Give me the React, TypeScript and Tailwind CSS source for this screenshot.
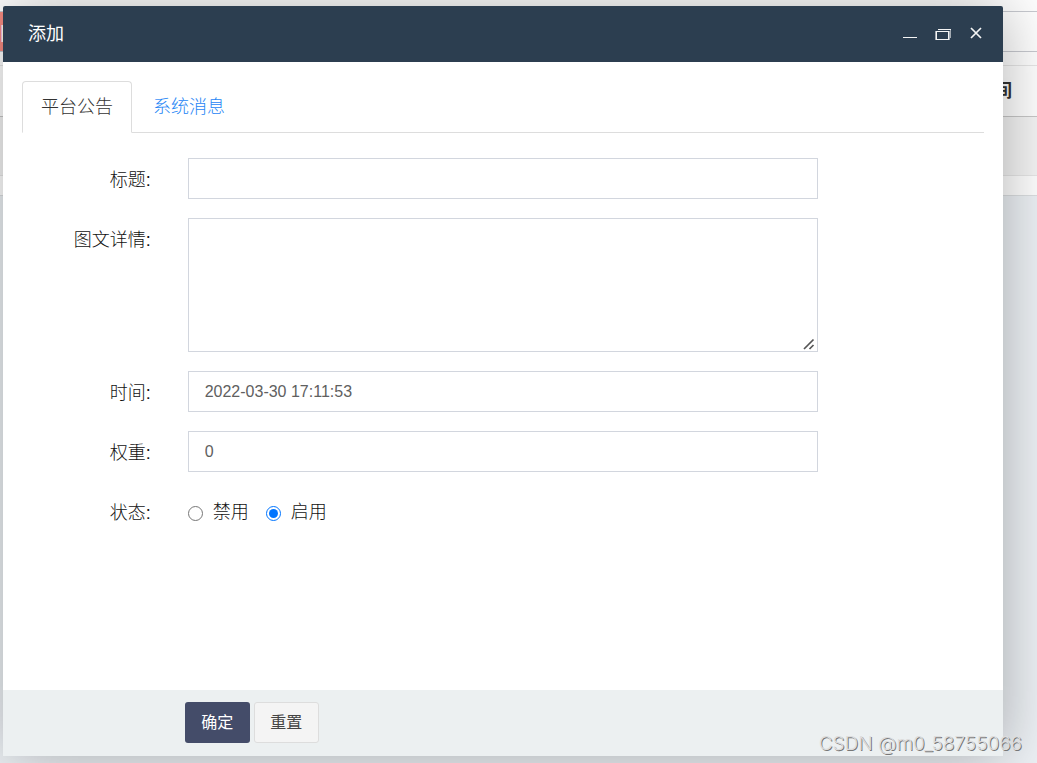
import { useState } from "react";
import type { ReactNode } from "react";

interface FieldRowProps {
  label: string;
  htmlFor?: string;
  children: ReactNode;
}

interface Tab {
  id: string;
  label: string;
}

const tabs: Tab[] = [
  { id: "notice", label: "平台公告" },
  { id: "message", label: "系统消息" },
];

const statuses = ["禁用", "启用"];

const inputClass =
  "block w-full border border-[#d2d6de] bg-white px-4 text-base text-[#606060] outline-none";

function FieldRow({ label, htmlFor, children }: FieldRowProps) {
  return (
    <div className="grid grid-cols-12">
      <label htmlFor={htmlFor} className="col-span-2 px-[19px] pt-[9px] text-right leading-[26px]">
        {label}
      </label>
      <div className="col-span-8 px-[18px]">{children}</div>
    </div>
  );
}

function PageBehind() {
  return (
    <div aria-hidden="true" className="flex min-h-screen flex-col bg-[#edf1f5]">
      <div className="bg-white">
        <div className="h-[11px]" />
        <div className="flex h-[41px] border-y border-[#c8cad0]">
          <div className="flex w-8 items-center bg-[#f58a80] text-white">|</div>
        </div>
        <div className="h-[13px]" />
        <div className="flex h-[52px] items-center justify-end border-t border-b border-t-[#e7e7e7] border-b-[#c8c8c8] pr-[25px] text-lg font-bold text-[#333]">
          时间
        </div>
        <div className="h-[59px] border-b border-[#e7e7e7] bg-[#f5f5f5]" />
        <div className="h-5 border-b border-[#dcdfe1]" />
      </div>
    </div>
  );
}

function WindowControls() {
  return (
    <div className="flex gap-[17px] text-[#f4f4f4]">
      <button type="button" aria-label="最小化" className="h-4 w-4">
        <svg viewBox="0 0 16 16" className="h-4 w-4" shapeRendering="crispEdges">
          <path d="M1 11.5h14" stroke="currentColor" fill="none" />
        </svg>
      </button>
      <button type="button" aria-label="最大化" className="h-4 w-4">
        <svg viewBox="0 0 16 16" className="h-4 w-4" shapeRendering="crispEdges" overflow="visible">
          <path d="M1 5.5h13M1 13.5h13" stroke="currentColor" fill="none" />
          <path d="M1.5 5v9M13.5 5v9" stroke="currentColor" fill="none" />
          <path d="M3 3.5h13" stroke="currentColor" fill="none" />
          <path d="M.5 5v9M14.5 5v9M15.500 4v8" stroke="currentColor" opacity="0.6" fill="none" />
        </svg>
      </button>
      <button type="button" aria-label="关闭" className="h-4 w-4">
        <svg viewBox="0 0 16 16" className="h-4 w-4">
          <path d="M3 2l10 10M13 2L3 12" stroke="currentColor" strokeWidth="1.7" fill="none" />
        </svg>
      </button>
    </div>
  );
}

export default function App() {
  const [activeTab, setActiveTab] = useState("notice");

  return (
    <div className="relative overflow-hidden font-['Liberation_Sans','Noto_Sans_CJK_SC',sans-serif] text-lg text-[#333]">
      <PageBehind />

      <div
        role="dialog"
        aria-labelledby="dialog-title"
        className="absolute top-1.5 right-[34px] bottom-[7px] left-[3px] flex flex-col rounded-xs bg-white shadow-[1px_1px_62px_rgba(0,0,0,0.3)]"
      >
        <header className="flex h-14 shrink-0 items-center justify-between rounded-t-xs bg-[#2c3e50] pr-[19px] pl-[25px]">
          <h2 id="dialog-title" className="text-white">添加</h2>
          <WindowControls />
        </header>

        <form className="flex flex-1 flex-col" onSubmit={(e) => e.preventDefault()}>
          <div role="tablist" className="mx-[19px] mt-[19px] flex h-[52px] border-b border-[#ddd] font-light">
            {tabs.map((tab) => (
              <button
                key={tab.id}
                type="button"
                role="tab"
                aria-selected={activeTab === tab.id}
                onClick={() => setActiveTab(tab.id)}
                className={
                  activeTab === tab.id
                    ? "-mb-px mr-0.5 rounded-t border border-[#ddd] border-b-white bg-white px-[18px] text-[#333]"
                    : "-mb-px mr-0.5 border border-transparent px-[18px] text-[#1f86f5]"
                }
              >
                {tab.label}
              </button>
            ))}
          </div>

          <div className="flex flex-1 flex-col gap-[19px] pt-[25px] font-light text-[#111]">
            <FieldRow label="标题:" htmlFor="title">
              <input id="title" type="text" className={`${inputClass} h-[41px]`} />
            </FieldRow>
            <FieldRow label="图文详情:" htmlFor="detail">
              <div className="relative">
                <textarea id="detail" className={`${inputClass} h-[134px] resize-none py-2`} />
                <svg viewBox="0 0 12 12" className="pointer-events-none absolute right-[3px] bottom-0.5 h-3 w-3">
                  <path d="M1 11L10.5 1.5M6.5 11l4-4" stroke="#555" strokeWidth="1.7" fill="none" />
                </svg>
              </div>
            </FieldRow>
            <FieldRow label="时间:" htmlFor="time">
              <input id="time" type="text" defaultValue="2022-03-30 17:11:53" className={`${inputClass} h-[41px]`} />
            </FieldRow>
            <FieldRow label="权重:" htmlFor="weight">
              <input id="weight" type="text" defaultValue="0" className={`${inputClass} h-[41px]`} />
            </FieldRow>
            <FieldRow label="状态:">
              <div className="flex gap-[17px] pt-2 leading-[26px]">
                {statuses.map((status) => (
                  <label key={status} className="flex items-center gap-2.5">
                    <input type="radio" name="status" value={status} defaultChecked={status === "启用"} className="mt-0.5 h-[15px] w-[15px]" />
                    {status}
                  </label>
                ))}
              </div>
            </FieldRow>
          </div>

          <footer className="grid grid-cols-12 bg-[#ecf0f1] pt-3 pb-[13px] text-base">
            <div className="col-span-8 col-start-3 flex gap-1 pl-[15px]">
              <button type="submit" className="h-[41px] w-[65px] rounded-[3px] bg-[#444c69] text-white">
                确定
              </button>
              <button type="reset" className="h-[41px] w-[65px] rounded-[3px] border border-[#ddd] bg-[#f4f4f4] text-[#444]">
                重置
              </button>
            </div>
          </footer>
        </form>
      </div>

      <span className="absolute right-[15px] bottom-1 font-['Inter','Liberation_Sans',sans-serif] text-[19px] font-light text-[#ddd] [text-shadow:1px_1px_0_#777]">
        CSDN @m0_58755066
      </span>
    </div>
  );
}
